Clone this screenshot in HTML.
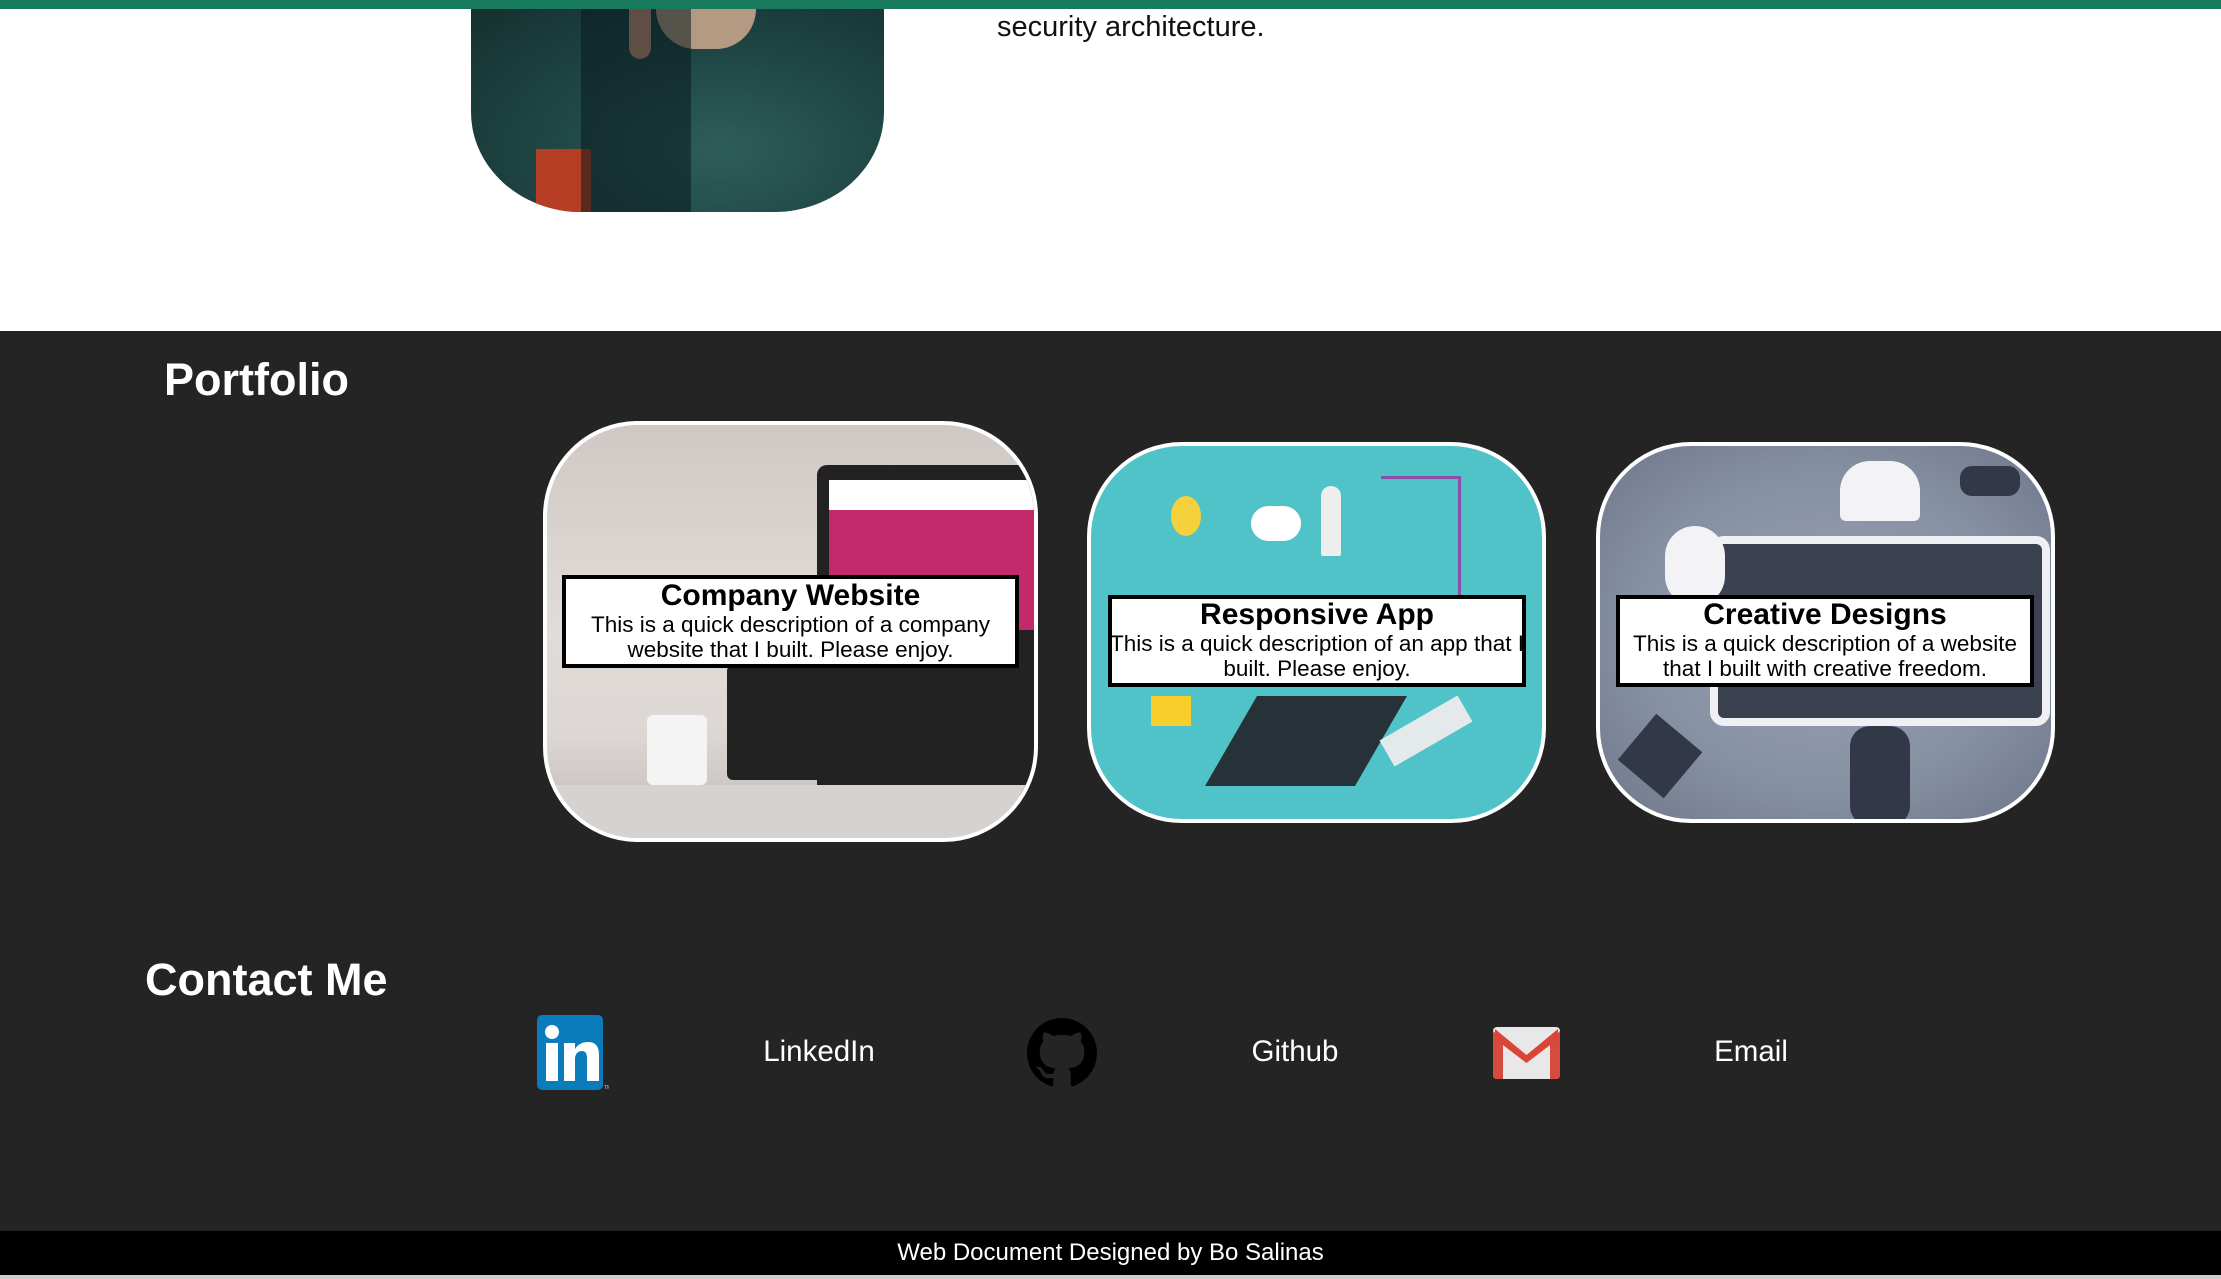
<!DOCTYPE html>
<html><head><meta charset="utf-8"><style>
*{margin:0;padding:0;box-sizing:border-box}
body{width:2221px;height:1279px;overflow:hidden;background:#242424;font-family:"Liberation Sans",Arial,sans-serif;position:relative}
.abs{position:absolute}
#top{left:0;top:0;width:2221px;height:331px;background:#fff}
#bar{left:0;top:0;width:2221px;height:9px;background:#177a5c}
#photo{left:471px;top:9px;width:413px;height:203px;border-radius:0 0 110px 110px/0 0 100px 100px;overflow:hidden;
background:radial-gradient(ellipse at 60% 70%,#2e5e5a 0%,#204846 45%,#15302f 100%)}
.card{position:absolute;border:4px solid #fff;border-radius:95px;overflow:hidden}
.cap{position:absolute;background:#fff;border:4px solid #000;text-align:center;color:#000}
.cap b{display:block;font-size:30px;line-height:32px}
.cap span{display:block;font-size:22.5px;line-height:25px}
h2{position:absolute;color:#fff;font-size:45px;font-weight:bold}
.lbl{position:absolute;color:#fff;font-size:29.5px;transform:translateX(-50%)}
</style></head><body>
<div id="top" class="abs"></div>
<div id="bar" class="abs"></div>
<div id="photo" class="abs">
  <div class="abs" style="left:185px;top:0;width:100px;height:40px;background:#b49a82;border-radius:0 0 40px 40px"></div>
  <div class="abs" style="left:158px;top:0;width:22px;height:50px;background:#c58e78;border-radius:0 0 12px 12px"></div>
  <div class="abs" style="left:65px;top:140px;width:55px;height:70px;background:#b53d24"></div>
  <div class="abs" style="left:110px;top:0;width:110px;height:203px;background:rgba(10,25,30,.55)"></div>
</div>
<div class="abs" style="left:997px;top:11px;font-size:29px;color:#111">security architecture.</div>

<h2 style="left:164px;top:354px">Portfolio</h2>

<div class="card" style="left:543px;top:421px;width:495px;height:421px;background:linear-gradient(180deg,#cfc8c4 0%,#e2dcd8 50%,#dcd7d4 75%,#bdb8b5 100%)">
  <div class="abs" style="left:270px;top:40px;width:230px;height:330px;background:#222;border-radius:10px"></div>
  <div class="abs" style="left:282px;top:55px;width:210px;height:150px;background:#c22a6c"></div>
  <div class="abs" style="left:282px;top:55px;width:210px;height:30px;background:#fff"></div>
  <div class="abs" style="left:180px;top:240px;width:150px;height:115px;background:#222;border-radius:6px"></div>
  <div class="abs" style="left:300px;top:250px;width:60px;height:110px;background:#222;border-radius:8px"></div>
  <div class="abs" style="left:100px;top:290px;width:60px;height:70px;background:#f4f4f4;border-radius:6px"></div>
  <div class="abs" style="left:0;top:360px;width:495px;height:61px;background:#d6d2d0"></div>
</div>
<div class="cap" style="left:562px;top:575px;width:457px;height:93px;padding-top:1px"><b>Company Website</b><span>This is a quick description of a company<br>website that I built. Please enjoy.</span></div>

<div class="card" style="left:1087px;top:442px;width:459px;height:381px;background:#50c3c8">
  <div class="abs" style="left:80px;top:50px;width:30px;height:40px;background:#f5d23c;border-radius:50%"></div>
  <div class="abs" style="left:160px;top:60px;width:50px;height:35px;background:#fff;border-radius:20px"></div>
  <div class="abs" style="left:230px;top:40px;width:20px;height:70px;background:#eee;border-radius:10px 10px 2px 2px"></div>
  <div class="abs" style="left:290px;top:30px;width:80px;height:120px;border:3px solid #8a4fa8;border-left:none;border-bottom:none"></div>
  <div class="abs" style="left:140px;top:250px;width:150px;height:90px;background:#263238;transform:skewX(-30deg)"></div>
  <div class="abs" style="left:290px;top:270px;width:90px;height:30px;background:#e4eaeb;transform:rotate(-30deg)"></div>
  <div class="abs" style="left:60px;top:250px;width:40px;height:30px;background:#f7ce2a"></div>
</div>
<div class="cap" style="left:1108px;top:595px;width:418px;height:92px;padding-top:0"><b>Responsive App</b><span style="white-space:nowrap;margin-left:-4px;margin-right:-4px">This is a quick description of an app that I<br>built. Please enjoy.</span></div>

<div class="card" style="left:1596px;top:442px;width:459px;height:381px;background:radial-gradient(ellipse at 50% 50%,#9aa3b5 0%,#8690a3 60%,#6e7789 100%)">
  <div class="abs" style="left:110px;top:90px;width:340px;height:190px;background:#3b4150;border:8px solid #eef0f4;border-radius:14px"></div>
  <div class="abs" style="left:240px;top:15px;width:80px;height:60px;background:#f3f3f5;border-radius:30px 30px 6px 6px"></div>
  <div class="abs" style="left:65px;top:80px;width:60px;height:80px;background:#f3f3f5;border-radius:30px"></div>
  <div class="abs" style="left:250px;top:280px;width:60px;height:100px;background:#323848;border-radius:20px"></div>
  <div class="abs" style="left:30px;top:280px;width:60px;height:60px;background:#323848;transform:rotate(40deg)"></div>
  <div class="abs" style="left:360px;top:20px;width:60px;height:30px;background:#323848;border-radius:12px"></div>
</div>
<div class="cap" style="left:1616px;top:595px;width:418px;height:92px;padding-top:0"><b>Creative Designs</b><span>This is a quick description of a website<br>that I built with creative freedom.</span></div>

<h2 style="left:145px;top:954px">Contact Me</h2>

<svg class="abs" style="left:537px;top:1015px" width="72" height="76" viewBox="0 0 72 76">
<rect x="0" y="0" width="66" height="75" rx="5" fill="#0a7bbb"/>
<circle cx="15" cy="17" r="7" fill="#fff"/>
<rect x="9" y="28" width="12" height="38" fill="#fff"/>
<path d="M27 28h11v6c3-5 8-7 13-7c8 0 11 5 11 13v26h-12v-23c0-5-2-7-5-7c-4 0-7 3-7 8v22h-11z" fill="#fff"/>
<text x="67" y="74" font-size="5" fill="#ccc" font-family="Liberation Sans">TM</text>
</svg>
<div class="lbl" style="left:819px;top:1035px">LinkedIn</div>

<svg class="abs" style="left:1027px;top:1018px" width="70" height="70" viewBox="0 0 16 16">
<path fill="#000" d="M8 0C3.58 0 0 3.58 0 8c0 3.54 2.29 6.53 5.47 7.59.4.07.55-.17.55-.38 0-.19-.01-.82-.01-1.49-2.01.37-2.53-.49-2.69-.94-.09-.23-.48-.94-.82-1.13-.28-.15-.68-.52-.01-.53.63-.01 1.08.58 1.23.82.72 1.21 1.87.87 2.33.66.07-.52.28-.87.51-1.07-1.78-.2-3.64-.89-3.64-3.95 0-.87.31-1.59.82-2.15-.08-.2-.36-1.02.08-2.12 0 0 .67-.21 2.2.82.64-.18 1.32-.27 2-.27.68 0 1.36.09 2 .27 1.53-1.04 2.2-.82 2.2-.82.44 1.1.16 1.92.08 2.12.51.56.82 1.27.82 2.15 0 3.07-1.87 3.75-3.65 3.95.29.25.54.73.54 1.48 0 1.07-.01 1.93-.01 2.2 0 .21.15.46.55.38A8.013 8.013 0 0016 8c0-4.42-3.58-8-8-8z"/>
</svg>
<div class="lbl" style="left:1295px;top:1035px">Github</div>

<svg class="abs" style="left:1493px;top:1027px" width="67" height="52" viewBox="0 0 67 52">
<rect x="0" y="0" width="67" height="52" rx="4" fill="#e8e8e8"/>
<path d="M0 4 L0 48 Q0 52 4 52 L10 52 L10 14 Z" fill="#d54b3d"/>
<path d="M67 4 L67 48 Q67 52 63 52 L57 52 L57 14 Z" fill="#d54b3d"/>
<path d="M2 2 L33.5 28 L65 2 L65 12 L33.5 36 L2 12 Z" fill="#db4437"/>
</svg>
<div class="lbl" style="left:1751px;top:1035px">Email</div>

<div class="abs" style="left:0;top:1231px;width:2221px;height:44px;background:#000;color:#fff;font-size:24px;text-align:center;line-height:44px">Web Document Designed by Bo Salinas</div>
<div class="abs" style="left:0;top:1275px;width:2221px;height:4px;background:#ccc"></div>
</body></html>
